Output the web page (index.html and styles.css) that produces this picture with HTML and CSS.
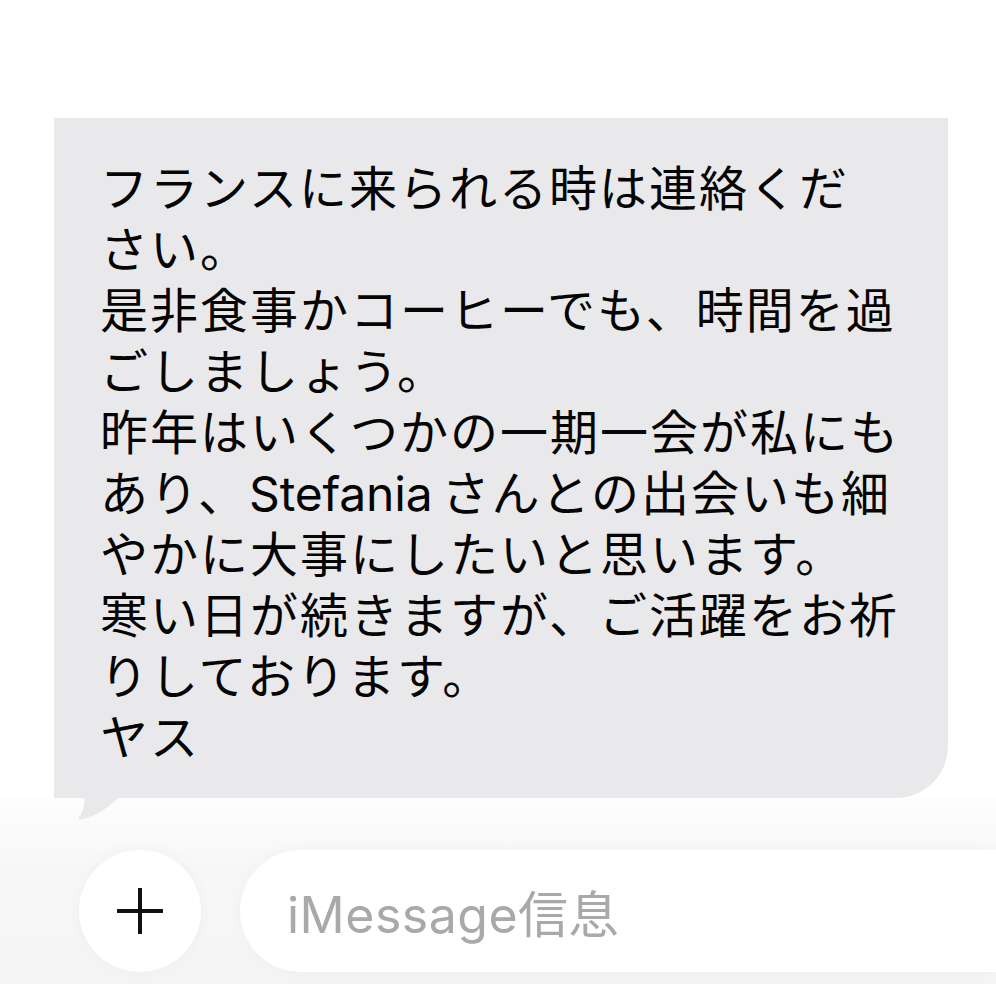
FILE: index.html
```html
<!DOCTYPE html>
<html lang="ja">
<head>
<meta charset="utf-8">
<link rel="stylesheet" href="styles.css">
</head>
<body>
<main class="screen">
  <section class="thread">
    <div class="bubble">
      <p class="msg">フランスに来られる時は連絡くだ<br>さい。<br>是非食事かコーヒーでも、時間を過<br>ごしましょう。<br>昨年はいくつかの一期一会が私にも<br>あり、<span class="latin">Stefania</span>さんとの出会いも細<br>やかに大事にしたいと思います。<br>寒い日が続きますが、ご活躍をお祈<br>りしております。<br>ヤス</p>
      <svg class="tail" viewBox="0 0 70 60" width="70" height="60" aria-hidden="true">
        <path d="M0 0 L0 10 C0 26 12 33 30 36 C31 45 29 52 25 57 C24 59 26 60 29 59 C44 55 55 47 64 38 L70 38 L70 0 Z" fill="#e9e9eb"/>
      </svg>
    </div>
  </section>
  <section class="dock">
    <div class="composer">
      <button class="plus" aria-label="追加">
        <svg viewBox="0 0 46 46" width="46" height="46"><path d="M23 1 V45 M1 23 H45" stroke="#111" stroke-width="4" stroke-linecap="round" fill="none"/></svg>
      </button>
      <div class="field"><span class="placeholder">iMessage信息</span></div>
    </div>
  </section>
  <div class="foot"></div>
</main>
</body>
</html>
```
FILE: styles.css
```css
* { box-sizing: border-box; }
html, body { margin: 0; padding: 0; background: #ffffff; }
body {
  width: 996px;
  height: 996px;
  overflow: hidden;
  font-family: "Inter", "Noto Sans CJK JP", sans-serif;
  color: #050505;
}
.screen { display: flex; flex-direction: column; }
.thread {
  padding: 118px 48px 0 54px;
  position: relative;
  z-index: 2;
}
.bubble {
  position: relative;
  background: #e9e9eb;
  border-radius: 0 0 52px 0;
  padding: 40px 20px 30px 46px;
}
.msg {
  margin: 0;
  font-size: 48px;
  line-height: 61px;
  letter-spacing: 2px;
  white-space: nowrap;
}
.latin {
  letter-spacing: -0.2px;
  margin-left: 1px;
  margin-right: 9px;
}
.tail {
  position: absolute;
  left: 0;
  bottom: -22px;
  display: block;
}
.dock {
  background: linear-gradient(to bottom, #fdfdfd 0%, #f7f7f7 40%, #f5f5f5 100%);
  padding: 52px 0 12px 79px;
  position: relative;
  z-index: 1;
}
.composer {
  display: flex;
  align-items: center;
  gap: 39px;
}
.plus {
  width: 122px;
  height: 122px;
  border-radius: 50%;
  border: none;
  background: #ffffff;
  box-shadow: 0 0 18px rgba(0,0,0,0.035);
  display: flex;
  align-items: center;
  justify-content: center;
  padding: 0;
  flex: none;
}
.field {
  flex: 1;
  height: 122px;
  border-radius: 61px 0 0 61px;
  background: #ffffff;
  box-shadow: 0 0 18px rgba(0,0,0,0.035);
  display: flex;
  align-items: center;
  padding-left: 47px;
}
.placeholder {
  font-size: 50px;
  color: #a9a9ab;
  letter-spacing: 0.5px;
}
.foot { height: 12px; background: #ffffff; }
```
